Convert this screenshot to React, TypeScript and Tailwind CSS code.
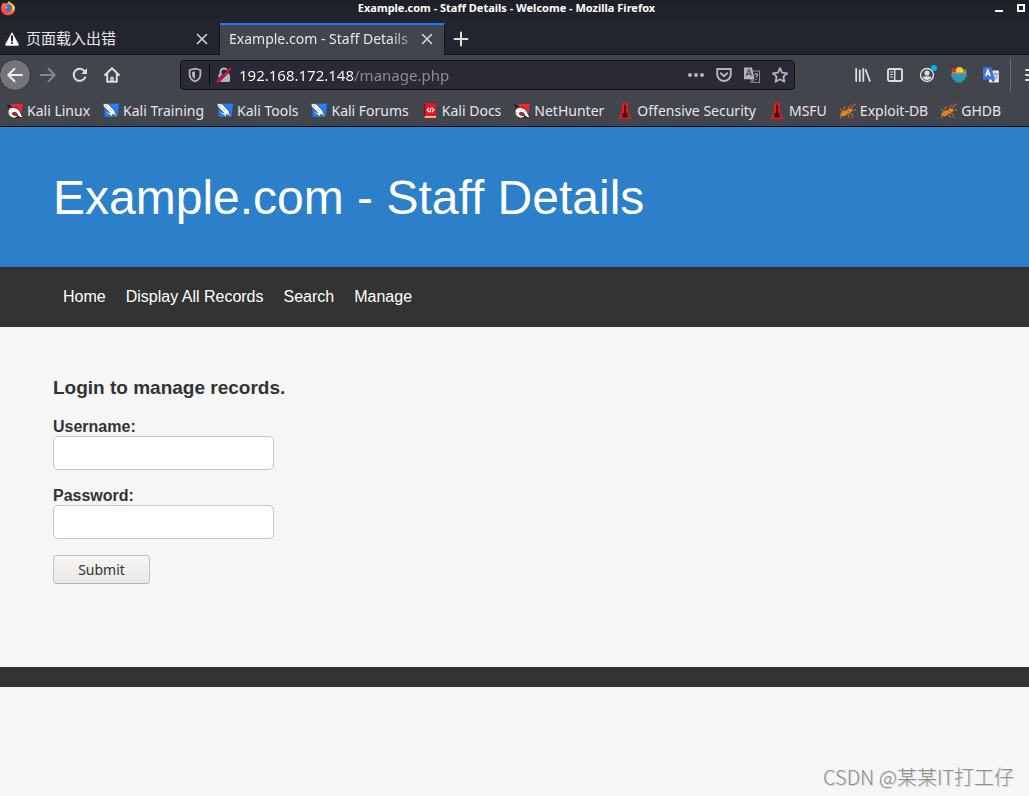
import React from "react";

const UI_FONT = "font-['Noto_Sans','Noto_Sans_CJK_SC',sans-serif]";

function FirefoxLogo() {
  return (
    <svg viewBox="0 0 16 16" className="size-4" aria-hidden="true">
      <defs>
        <linearGradient id="fox" x1="0.9" y1="0" x2="0.2" y2="1">
          <stop offset="0" stopColor="#ffe04a" />
          <stop offset="0.45" stopColor="#ff7a2a" />
          <stop offset="1" stopColor="#f0305a" />
        </linearGradient>
      </defs>
      <path d="M3 2.6C3.6 3.6 5 3.9 6 3.6 7.500 3.200 8.500 1.500 9.400.9c.2 1.500 1.600 2.100 2.700 2.900C13.800 5 15 6.500 15 8.700c0 3.900-3.200 6.600-7 6.600S1 12.400 1 8.700C1 6.100 2 5 3 2.600z" fill="url(#fox)" />
      <path d="M7.500 4.300c2.500-.4 4.400 1.100 4.400 3.600 0 2.300-1.700 3.700-3.800 3.700-1.800 0-3.300-1-3.500-2.900.9.6 2.300.3 2.900-.5-1.300-.2-2.100-.6-2.200-1.700.6-.2 1.200-.9 2.200-2.200z" fill="#3f6fd8" />
      <path d="M5 6.800c.8-.6 1.900-.4 2.900.1-.2.900-1.700 1.200-2.500.8z" fill="#ffb13a" />
      <path d="M9.400.9c.3 2 2.200 2.600 3.200 5 .8 2 .2 4.300-1 5.400 1.700-.4 3-2 3.200-4C14.600 4.400 10.700 3.700 9.400.9z" fill="#ffd83f" />
    </svg>
  );
}

function WarningIcon() {
  return (
    <svg viewBox="0 0 14 14" className="size-[14px] shrink-0" aria-hidden="true">
      <path d="M7 .6 13.400 12.200Q13.700 13.400 12.600 13.400H1.400Q.3 13.400.6 12.200z" fill="#f9f9fa" stroke="#f9f9fa" strokeWidth=".6" strokeLinejoin="round" />
      <path d="M7 4.200v4.200" stroke="#23252e" strokeWidth="2" strokeLinecap="round" />
      <circle cx="7" cy="11" r="1.100" fill="#23252e" />
    </svg>
  );
}

function CloseIcon() {
  return (
    <svg viewBox="0 0 12 12" className="size-3" aria-hidden="true">
      <path d="M1.500 1.500l9 9M10.500 1.500l-9 9" stroke="#d7d8da" strokeWidth="1.600" strokeLinecap="round" />
    </svg>
  );
}

function PlusIcon() {
  return (
    <svg viewBox="0 0 16 16" className="size-4" aria-hidden="true">
      <path d="M8 1.500v13M1.500 8h13" stroke="#dedfe0" strokeWidth="2" strokeLinecap="round" />
    </svg>
  );
}

function ArrowIcon({ flip = false }: { flip?: boolean }) {
  return (
    <svg viewBox="0 0 16 16" className={flip ? "size-4 rotate-180" : "size-4"} fill="none" stroke="currentColor" strokeWidth="2" strokeLinecap="round" strokeLinejoin="round" aria-hidden="true">
      <path d="M15 8H1.500M7.500 1.800 1.300 8l6.200 6.200" />
    </svg>
  );
}

function ReloadIcon() {
  return (
    <svg viewBox="0 0 16 16" className="size-4" aria-hidden="true">
      <path d="M13.200 10.300A6 6 0 1 1 12.400 4" fill="none" stroke="#dcdddd" strokeWidth="2" strokeLinecap="round" />
      <path d="M15 1.200v5.300a.6.6 0 0 1-.6.600H9.200z" fill="#dcdddd" />
    </svg>
  );
}

function HomeIcon() {
  return (
    <svg viewBox="0 0 16 16" className="size-4" fill="none" stroke="#dcdddd" strokeLinecap="round" strokeLinejoin="round" aria-hidden="true">
      <path d="M1 8 8 1.200 15 8M3.200 7v7.800h9.600V7" strokeWidth="2" />
      <path d="M7 14.500v-4h2v4" strokeWidth="1.500" />
    </svg>
  );
}

function ShieldIcon() {
  return (
    <svg viewBox="0 0 16 16" className="size-4" aria-hidden="true">
      <path d="M8 1.600 13.400 3v4.500c0 3.300-2.200 5.700-5.400 7-3.200-1.300-5.400-3.700-5.400-7V3z" fill="none" stroke="#b3b4b9" strokeWidth="1.800" strokeLinejoin="round" />
      <path d="M8 4.200v7.900c-1.900-1-3-2.500-3-4.600V5z" fill="#b3b4b9" />
    </svg>
  );
}

function InsecureLockIcon() {
  return (
    <svg viewBox="0 0 16 16" className="size-4" aria-hidden="true">
      <path d="M4.500 8V5a3.500 3.500 0 0 1 7 0v3" fill="none" stroke="#b3b4b9" strokeWidth="2" />
      <rect x="2.500" y="7" width="11.500" height="8" rx="1.200" fill="#b3b4b9" />
      <path d="M1.400 14.800 14.400 1.600" stroke="#292a35" strokeWidth="3.400" />
      <path d="M1.400 14.800 14.400 1.600" stroke="#f4083f" strokeWidth="2" strokeLinecap="round" />
    </svg>
  );
}

function DotsIcon() {
  return (
    <svg viewBox="0 0 16 16" className="size-4" fill="#b3b4b9" aria-hidden="true">
      <circle cx="2" cy="8" r="2" />
      <circle cx="8" cy="8" r="2" />
      <circle cx="14" cy="8" r="2" />
    </svg>
  );
}

function PocketIcon() {
  return (
    <svg viewBox="0 0 16 16" className="size-4" fill="none" stroke="#b3b4b9" strokeWidth="2" strokeLinecap="round" strokeLinejoin="round" aria-hidden="true">
      <path d="M1.200 2h13.600v5.200a6.800 6.800 0 0 1-13.600 0z" />
      <path d="m4.800 6.300 3.200 3 3.200-3" />
    </svg>
  );
}

function TranslatePageIcon() {
  return (
    <svg viewBox="0 0 16 16" className="size-4" aria-hidden="true">
      <rect x="7" y="4" width="8.500" height="11.400" fill="none" stroke="#8f9096" />
      <path d="M0 .5h8l2.500 11.700H0z" fill="#b3b4b9" />
      <path d="m2.300 9 2-6h1.200l2 6M3.100 7h3.600" fill="none" stroke="#50525b" strokeWidth="1.300" />
      <path d="M10.800 8.200c.1-2 3-1.600 2.700 0-.2 1-1.400 1-1.400 2.200M12.100 12v1" fill="none" stroke="#b3b4b9" strokeWidth="1.100" />
      <path d="m7 12.300 2.200 3 .8-3z" fill="#8f9096" />
    </svg>
  );
}

function StarIcon() {
  return (
    <svg viewBox="0 0 16 16" className="size-4" aria-hidden="true">
      <path d="m8 1.100 2.100 4.600 5 .6-3.700 3.400 1 5L8 12.300l-4.400 2.400 1-5L.9 6.300l5-.6z" fill="none" stroke="#b3b4b9" strokeWidth="1.800" strokeLinejoin="round" />
    </svg>
  );
}

function LibraryIcon() {
  return (
    <svg viewBox="0 0 16 16" className="size-4" fill="none" stroke="#dcdddd" strokeWidth="1.800" strokeLinecap="round" aria-hidden="true">
      <path d="M1.200 2v12M4.800 3.500V14M8.300 2v12M10.800 3l4 11" />
    </svg>
  );
}

function SidebarIcon() {
  return (
    <svg viewBox="0 0 16 16" className="size-4" fill="none" stroke="#dcdddd" aria-hidden="true">
      <rect x="1" y="2" width="14" height="12" rx="1.800" strokeWidth="1.900" />
      <path d="M7.700 2v12" strokeWidth="1.500" />
      <path d="M3 5h3M3 7.500h3M3 10h3" strokeWidth="1.100" />
    </svg>
  );
}

function AccountIcon() {
  return (
    <svg viewBox="0 0 20 20" className="size-5" aria-hidden="true">
      <circle cx="10" cy="10" r="6.500" fill="none" stroke="#dcdddd" strokeWidth="1.400" />
      <circle cx="10" cy="8" r="2.600" fill="#dcdddd" />
      <path d="M5.500 12.200c1-1.400 8-1.400 9 0-1 1.800-2.600 2.800-4.500 2.800s-3.500-1-4.500-2.800z" fill="#dcdddd" />
      <circle cx="17" cy="3" r="3" fill="#00b3f4" />
    </svg>
  );
}

function SaladIcon() {
  return (
    <svg viewBox="0 0 16 16" className="size-4" aria-hidden="true">
      <circle cx="3.500" cy="4" r="3" fill="#d92e3c" />
      <circle cx="13" cy="4.500" r="2.600" fill="#55a944" />
      <circle cx="8.500" cy="3.700" r="3.600" fill="#ffc928" />
      <path d="M1 6h14" stroke="#f58d2a" strokeWidth="1.500" />
      <path d="M6 3.300h2M9.500 4.300h2" stroke="#fff09d" />
      <path d="M0 6.500h16c0 3.700-1.700 6-4.300 7.300L11 15.600H5l-.7-1.800C1.700 12.500 0 10.200 0 6.500z" fill="#299ab3" />
    </svg>
  );
}

function GoogleTranslateIcon() {
  return (
    <svg viewBox="0 0 16 16" className="size-4" aria-hidden="true">
      <rect x="6" y="3.500" width="9.800" height="12" rx=".8" fill="#e5e8ed" />
      <path d="M10 7h5M12.400 5.600V7M11 8.300c.6 1.800 1.800 2.900 3 3.700M14 7.500c-.3 2.300-1.700 4-3.500 5" stroke="#668cce" fill="none" />
      <path d="M0 1Q0 .3.800.3h7.600l3.300 12.300H.8Q0 12.600 0 11.800z" fill="#3975e8" />
      <path d="m2.500 9 2.300-6 2.400 6M3.300 7h3.100" fill="none" stroke="#fff" strokeWidth="1.400" />
      <path d="m8.200 12.600 2.200 3 1.300-3z" fill="#2853ad" />
    </svg>
  );
}

function MenuIcon() {
  return (
    <svg viewBox="0 0 16 16" className="size-4" aria-hidden="true">
      <path d="M1 3h14M1 8h14M1 13h14" stroke="#dcdddd" strokeWidth="2" strokeLinecap="round" />
    </svg>
  );
}

function DragonIcon() {
  return (
    <svg viewBox="0 0 16 16" className="size-4" aria-hidden="true">
      <path d="M3 1.300 16 .8 14 12.500 9 9z" fill="#f8252f" />
      <path d="M0 1.200 5 2.800 1.500 5z" fill="#1d1e23" />
      <path d="M.8 8.500C.8 5.400 3.800 3.400 7.500 4c3.800.7 5.700 3.200 6.200 5.500l1.900 5.200-5.800.5C4 15.500.8 12.400.8 8.500z" fill="#2a2a30" />
      <path d="M5 9.500c1.300-1.400 3.800-.9 4.600 1l.9 2.200c-2.700.7-5-.6-5.500-3.200z" fill="#c31b27" />
      <path d="M1.400 8.800C1.500 6 4.100 4.400 7.500 4.900c3.400.5 4.900 2.600 5.600 4.900l2.200 4.400c-2.100-.2-3.700-1-4.600-2.800-.9-2-2.500-3-4.400-2.400-1.500.5-1.700 2-.5 3 1 .9 2.500 1.300 4.600 1-1.600 1.900-4.300 2.100-6.300.8-1.800-1.100-2.800-2.900-2.700-5z" fill="#ffffff" />
      <path d="m3.800 6 1.500 1.400M1.800 9.500l2 .2M8.300 5.400 7.800 6.900M11.300 7.800l-1.300.9" stroke="#9a9ba0" strokeWidth=".7" />
    </svg>
  );
}

function KnifeIcon() {
  return (
    <svg viewBox="0 0 16 16" className="size-4" aria-hidden="true">
      <path d="M1 .8h15l-1.400 13H1.800z" fill="#2480f8" />
      <path d="M0 .3 5.300 1l6.400 6.700.6 2.200 3.500 5.100-5.100-3.200-2.200-.3L.5 3.500z" fill="#ffffff" stroke="#1e2738" strokeWidth=".6" strokeLinejoin="round" />
      <path d="m1.500 1.700 3 3M6.500 6 8 7.700" stroke="#7f8590" strokeWidth=".8" />
      <path d="m3.500 9.300 5.600 1.500-.3 2.300z" fill="#ffffff" />
      <path d="m11 10.500 4.500 4.300" stroke="#2a3140" strokeWidth=".5" />
    </svg>
  );
}

function DocsIcon() {
  return (
    <svg viewBox="0 0 16 16" className="size-4" aria-hidden="true">
      <path d="M2.500.3H14v15H2z" fill="#e41820" />
      <path d="M2 .5h1.500v12.800H2z" fill="#8d1116" />
      <path d="M3 13h11v2.300H2.500z" fill="#d5c8c5" />
      <path d="M2 15.300h12" stroke="#b51118" />
      <path d="M7 5 5 7l2 2M10 5l2 2-2 2M9 4.700 8 9.300" fill="none" stroke="#fff" strokeWidth="1.100" />
    </svg>
  );
}

function OffensiveIcon() {
  return (
    <svg viewBox="0 0 16 16" className="size-4" aria-hidden="true">
      <path d="M4.500.3h7L11 4l.2 6.500L15 16H1l3.800-5.500L5 4z" fill="#f0181f" />
      <path d="M7.500 1.500h1l.2 1.800.7.9-.6 1.300.3 4 1.700 2-.5 3.500H5.700l-.5-3.500 1.700-2 .3-4-.6-1.300.7-.9z" fill="#3a1115" />
      <path d="M3.500 14.500h9" stroke="#9c1219" strokeWidth=".8" />
    </svg>
  );
}

function SpiderIcon() {
  return (
    <svg viewBox="0 0 16 16" className="size-4" aria-hidden="true">
      <path d="M5 10 1 6.500H0M6 9 3.500 5 6 3.500M8 8l.5-3.500 2.500-3M10 7l3.500-5L16 1M11 8.500l2-1.500 3-.2M9 10l3 1 1 4M8 11l1.500 4M3 11 0 13l1 2.500" fill="none" stroke="#dd7b18" strokeWidth=".9" />
      <ellipse cx="4" cy="10.500" rx="3.500" ry="2.500" transform="rotate(-15 4 10.500)" fill="#e98722" />
      <ellipse cx="9" cy="8" rx="3.300" ry="1.900" transform="rotate(-30 9 8)" fill="#e98722" />
      <path d="m1.500 9.500 3 2M7.500 8l2 .7" stroke="#a85108" strokeWidth=".7" />
    </svg>
  );
}

const bookmarks: { label: string; Icon: () => React.ReactElement }[] = [
  { label: "Kali Linux", Icon: DragonIcon },
  { label: "Kali Training", Icon: KnifeIcon },
  { label: "Kali Tools", Icon: KnifeIcon },
  { label: "Kali Forums", Icon: KnifeIcon },
  { label: "Kali Docs", Icon: DocsIcon },
  { label: "NetHunter", Icon: DragonIcon },
  { label: "Offensive Security", Icon: OffensiveIcon },
  { label: "MSFU", Icon: OffensiveIcon },
  { label: "Exploit-DB", Icon: SpiderIcon },
  { label: "GHDB", Icon: SpiderIcon },
];

const links = ["Home", "Display All Records", "Search", "Manage"];

function ToolButton({ label, children }: { label: string; children: React.ReactNode }) {
  return (
    <button type="button" aria-label={label} className="flex size-8 shrink-0 items-center justify-center">
      {children}
    </button>
  );
}

function UrlButton({ label, children }: { label: string; children: React.ReactNode }) {
  return (
    <button type="button" aria-label={label} className="flex h-full w-7 shrink-0 items-center justify-center">
      {children}
    </button>
  );
}

function Browser() {
  return (
    <header className={`overflow-hidden text-sm text-[#e6e6e7] ${UI_FONT}`}>
      <div className="grid h-[23px] grid-cols-[1fr_auto_1fr] items-start bg-linear-to-b from-[#1e2027] to-[#23252e]">
        <FirefoxLogo />
        <p className="pr-4 text-[11px] leading-4 font-bold text-white">Example.com - Staff Details - Welcome - Mozilla Firefox</p>
        <div className="flex h-4 items-center justify-end gap-[14px] pr-1">
          <button type="button" aria-label="Minimize" className="flex size-2 items-end">
            <span className="h-0.5 w-full bg-white" />
          </button>
          <button type="button" aria-label="Maximize" className="size-2 border-2 border-white" />
        </div>
      </div>

      <div className="flex h-8 border-b border-[#15161b] bg-[#23252e]">
        <div className="flex w-[220px] items-center border-r border-[#15161b] pr-[7px] pl-[5px]">
          <WarningIcon />
          <span className="flex-1 pl-[7px] text-[15px]">页面载入出错</span>
          <button type="button" aria-label="Close tab" className="flex size-5 items-center justify-center">
            <CloseIcon />
          </button>
        </div>
        <div className="-mb-px flex w-[225px] items-center border-t-2 border-r border-t-[#2377ff] border-r-[#15161b] bg-[#42454c] pr-[7px] pb-0.5 pl-[9px]">
          <span className="flex-1 mask-r-from-85% mask-r-to-105% text-sm whitespace-nowrap">Example.com - Staff Details</span>
          <button type="button" aria-label="Close tab" className="flex size-5 shrink-0 items-center justify-center">
            <CloseIcon />
          </button>
        </div>
        <ToolButton label="New tab">
          <PlusIcon />
        </ToolButton>
      </div>

      <div className="flex h-10 items-center bg-[#42454c]">
        <button type="button" aria-label="Back" className="-ml-px flex size-8 shrink-0 items-center justify-center rounded-full border border-[#303238] bg-[#737579] text-[#ededee]">
          <ArrowIcon />
        </button>
        <button type="button" aria-label="Forward" disabled className="ml-px flex size-8 shrink-0 items-center justify-center text-[#85878b]">
          <ArrowIcon flip />
        </button>
        <ToolButton label="Reload">
          <ReloadIcon />
        </ToolButton>
        <ToolButton label="Home page">
          <HomeIcon />
        </ToolButton>
        <div className="mx-[52px] flex h-[30px] min-w-0 flex-1 items-center rounded border border-[#111217] bg-[#292a35]">
          <UrlButton label="Tracking protection">
            <ShieldIcon />
          </UrlButton>
          <span className="h-[22px] w-px bg-[#0d0e12]" />
          <UrlButton label="Connection not secure">
            <InsecureLockIcon />
          </UrlButton>
          <input
            aria-label="Address"
            defaultValue="192.168.172.148/manage.php"
            className="h-7 min-w-0 flex-1 bg-[linear-gradient(to_right,#ffffff_116px,#8e8f95_116px)] bg-clip-text pl-px text-[15px] text-transparent outline-none"
          />
          <UrlButton label="Page actions">
            <DotsIcon />
          </UrlButton>
          <UrlButton label="Save to Pocket">
            <PocketIcon />
          </UrlButton>
          <UrlButton label="Translate page">
            <TranslatePageIcon />
          </UrlButton>
          <UrlButton label="Bookmark page">
            <StarIcon />
          </UrlButton>
        </div>
        <ToolButton label="Library">
          <LibraryIcon />
        </ToolButton>
        <ToolButton label="Sidebars">
          <SidebarIcon />
        </ToolButton>
        <ToolButton label="Account">
          <AccountIcon />
        </ToolButton>
        <ToolButton label="Fruit bowl extension">
          <SaladIcon />
        </ToolButton>
        <ToolButton label="Translate extension">
          <GoogleTranslateIcon />
        </ToolButton>
        <span className="ml-[3px] h-[34px] w-px shrink-0 bg-[#6b6d73]" />
        <button type="button" aria-label="Menu" className="-mr-3 ml-[14px] flex size-4 shrink-0 items-center">
          <MenuIcon />
        </button>
      </div>

      <nav aria-label="Bookmarks" className="flex h-8 items-center gap-[13px] border-b border-[#0d0e11] bg-[#42454c] px-[7px]">
        {bookmarks.map(({ label, Icon }) => (
          <a key={label} href="#" className="flex shrink-0 items-center gap-1 text-sm whitespace-nowrap">
            <Icon />
            {label}
          </a>
        ))}
      </nav>
    </header>
  );
}

function Field({ id, label, type }: { id: string; label: string; type: string }) {
  return (
    <div className="mb-4 flex flex-col items-start">
      <label htmlFor={id} className="text-base leading-[19px] font-bold">
        {label}
      </label>
      <input id={id} name={id} type={type} className="h-[34px] w-[221px] rounded-[5px] border border-[#c8c4bf] bg-white px-2 outline-none" />
    </div>
  );
}

export default function App() {
  return (
    <div className="relative min-h-screen bg-[#f6f6f6] font-['Liberation_Sans',sans-serif] text-[#333333]">
      <Browser />

      <div className="flex h-[140px] items-center bg-[#2c80c9] px-[53px] pt-0.5">
        <h1 className="text-5xl text-white">Example.com - Staff Details</h1>
      </div>

      <nav aria-label="Site" className="flex h-[60px] items-center gap-5 bg-[#333333] px-[63px]">
        {links.map((name) => (
          <a key={name} href="#" className="text-base text-white">
            {name}
          </a>
        ))}
      </nav>

      <main className="px-[53px] pt-[50px] pb-[83px]">
        <h2 className="mb-[18px] text-[19px] leading-[22px] font-bold">Login to manage records.</h2>
        <form onSubmit={(event) => event.preventDefault()}>
          <Field id="username" label="Username:" type="text" />
          <Field id="password" label="Password:" type="password" />
          <button type="submit" className={`flex h-[29px] w-[97px] items-center justify-center rounded border border-[#c5c1bc] border-b-[#b5b0aa] bg-linear-to-b from-[#f6f5f4] to-[#e9e8e6] text-sm ${UI_FONT}`}>
            Submit
          </button>
        </form>
      </main>

      <footer className="h-5 bg-[#333333]" />

      <p className="absolute right-[15px] bottom-1 font-['Noto_Sans_CJK_SC',sans-serif] text-xl leading-[30px] font-light text-[#8f8f8f] text-shadow-[1px_1px_0_#d6d6d6]">
        CSDN @某某IT打工仔
      </p>
    </div>
  );
}
